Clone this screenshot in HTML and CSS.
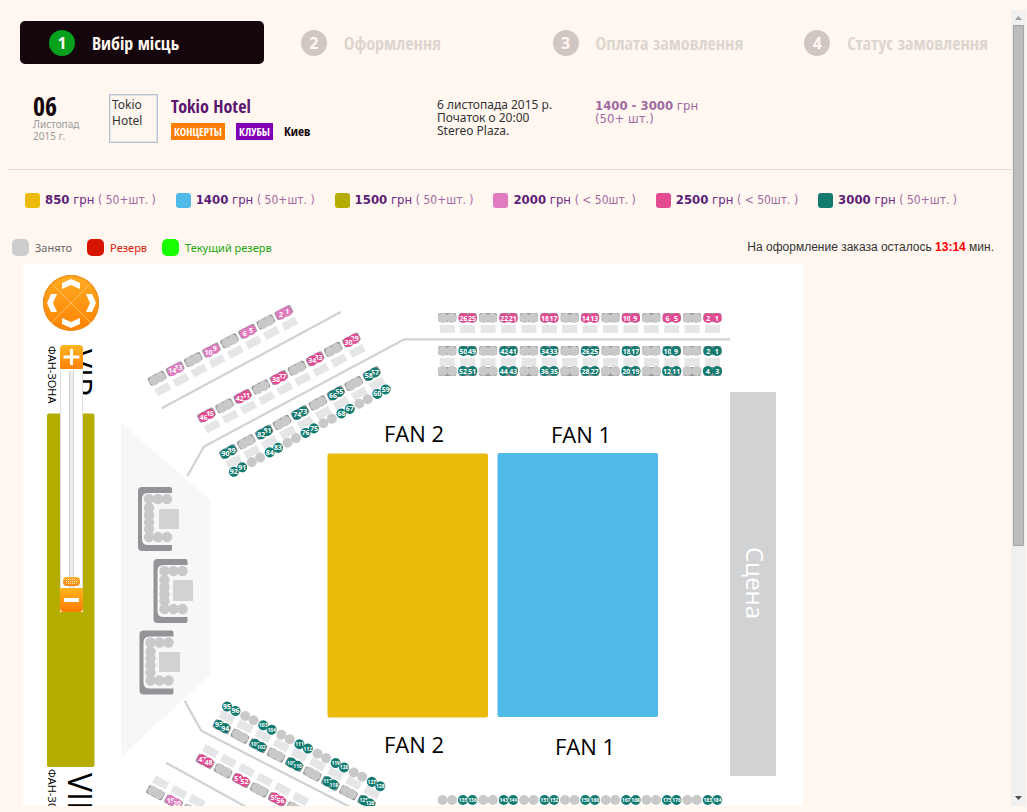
FILE: index.html
```html
<!DOCTYPE html>
<html lang="uk">
<head>
<meta charset="utf-8">
<title>Tokio Hotel</title>
<link rel="stylesheet" href="styles.css">
</head>
<body>
<div class="frame">
<main class="content">
  <ol class="steps">
    <li class="step step-active"><span class="step-num">1</span>Вибір місць</li>
    <li class="step"><span class="step-num">2</span>Оформлення</li>
    <li class="step"><span class="step-num">3</span>Оплата замовлення</li>
    <li class="step"><span class="step-num">4</span>Статус замовлення</li>
  </ol>

  <section class="event">
    <div class="date"><strong class="day">06</strong><span>Листопад</span><span>2015 г.</span></div>
    <div class="poster">Tokio Hotel</div>
    <div class="about">
      <a class="title" href="#">Tokio Hotel</a>
      <div class="tags"><a class="tag tag-concert" href="#">КОНЦЕРТЫ</a><a class="tag tag-club" href="#">КЛУБЫ</a><span class="city">Киев</span></div>
    </div>
    <div class="when">6 листопада 2015 р.<br>Початок о 20:00<br>Stereo Plaza.</div>
    <div class="cost"><b>1400 - 3000</b> грн<br>(50+ шт.)</div>
  </section>

  <ul class="prices">
    <li><i class="swatch c850"></i><span><b>850</b> грн <small>( 50+шт. )</small></span></li>
    <li><i class="swatch c1400"></i><span><b>1400</b> грн <small>( 50+шт. )</small></span></li>
    <li><i class="swatch c1500"></i><span><b>1500</b> грн <small>( 50+шт. )</small></span></li>
    <li><i class="swatch c2000"></i><span><b>2000</b> грн <small>( &lt; 50шт. )</small></span></li>
    <li><i class="swatch c2500"></i><span><b>2500</b> грн <small>( &lt; 50шт. )</small></span></li>
    <li><i class="swatch c3000"></i><span><b>3000</b> грн <small>( 50+шт. )</small></span></li>
  </ul>

  <div class="status">
    <ul class="states">
      <li class="busy"><i></i>Занято</li>
      <li class="reserve"><i></i>Резерв</li>
      <li class="mine"><i></i>Текущий резерв</li>
    </ul>
    <p class="timer">На оформление заказа осталось <b>13:14</b> мин.</p>
  </div>

  <div class="map">
    <svg class="hall" viewBox="23 264 780 542" preserveAspectRatio="xMinYMin slice">
      <defs>
        <g id="sofa">
          <path d="M32 0Q34 0 34 2V6H10Q4 6 4 12V52Q4 58 10 58H34V62Q34 64 32 64H4Q0 64 0 60V4Q0 0 4 0Z" fill="#939498"/>
          <g fill="#c9c9c9"><circle cx="11" cy="12" r="5.200"/><circle cx="20" cy="12" r="5.200"/><circle cx="29" cy="12" r="5.200"/><circle cx="11" cy="21" r="5.200"/><circle cx="11" cy="28" r="5.200"/><circle cx="11" cy="35" r="5.200"/><circle cx="11" cy="42" r="5.200"/><circle cx="11" cy="50" r="5.200"/><circle cx="20" cy="50" r="5.200"/><circle cx="29" cy="50" r="5.200"/></g>
        </g>
      </defs>
      <path d="M121 423L210.500 500.500V674L121 757Z" fill="#f7f7f7"/>
      <g fill="none" stroke="#d0d1d2" stroke-width="2.200">
        <path d="M161.700 408.300L340.700 312"/>
        <path d="M187.300 476L204 446.500L404.300 339.300H730"/>
        <path d="M184.700 701L201.300 730.700L352 808"/>
        <path d="M166 762.700L248 808"/>
      </g>
      <use href="#sofa" x="138" y="487"/><use href="#sofa" x="153.500" y="559"/><use href="#sofa" x="139.500" y="630.500"/>
      <g fill="#d1d2d4"><path d="M159 509h20v20h-20zM173 580h20v21h-20zM159 652h21v20h-21z"/></g>
      <rect x="327.500" y="453.500" width="160.500" height="264" rx="2" fill="#ebba0a"/>
      <rect x="497.500" y="453" width="160.500" height="264" rx="2" fill="#4fbae8"/>
      <rect x="730" y="392" width="46" height="384" fill="#d1d2d4"/>
      <rect x="47" y="413.500" width="47.500" height="353.500" rx="2" fill="#b4ad00"/>
      <g class="label">
        <text x="384" y="442">FAN 2</text><text x="551" y="443">FAN 1</text>
        <text x="384" y="753">FAN 2</text><text x="555" y="755">FAN 1</text>
      </g>
      <text class="stage" transform="translate(746 547) rotate(90)">Сцена</text>
      <g class="zone">
        <text transform="translate(48 346) rotate(90)">ФАН-ЗОНА</text>
        <text transform="translate(48 769) rotate(90)">ФАН-ЗОНА</text>
      </g>
      <g class="vip">
        <text transform="translate(68 349) rotate(90)">VIP</text>
        <text transform="translate(68 773) rotate(90)">VIP</text>
      </g>
      <g id="seats"></g>
    </svg>

    <div class="controls">
      <div class="pan">
        <svg class="pan-lines" viewBox="0 0 56 56" fill="none" stroke="#ffc062"><path d="M8 8L48 48M48 8L8 48"/></svg>
        <button class="pan-up" aria-label="Вгору"><svg viewBox="0 0 18 10"><path d="M9 0L18 4V10L9 6L0 10V4Z"/></svg></button>
        <button class="pan-left" aria-label="Ліворуч"><svg viewBox="0 0 10 18"><path d="M0 9L4 0H10L6 9L10 18H4Z"/></svg></button>
        <button class="pan-right" aria-label="Праворуч"><svg viewBox="0 0 10 18"><path d="M10 9L6 0H0L4 9L0 18H6Z"/></svg></button>
        <button class="pan-down" aria-label="Вниз"><svg viewBox="0 0 18 10"><path d="M9 10L18 6V0L9 4L0 0V6Z"/></svg></button>
      </div>
      <div class="zoom">
        <button class="zoom-in" aria-label="Збільшити"><svg viewBox="0 0 23 24"><path d="M10 4h3v6.500h6.500v3H13V20h-3v-6.500H3.500v-3H10z"/></svg></button>
        <input class="zoom-range" type="range" min="0" max="100" value="1" aria-label="Масштаб">
        <button class="zoom-out" aria-label="Зменшити"><svg viewBox="0 0 23 24"><path d="M4 10h15v4H4z"/></svg></button>
      </div>
    </div>
  </div>
</main>

<div class="scrollbar">
  <button aria-label="Прокрутити вгору"><svg viewBox="0 0 15 15"><path d="M4 10L7.500 6L11 10Z" fill="#a0a0a0"/></svg></button>
  <div class="track"><div class="thumb"></div></div>
  <button aria-label="Прокрутити вниз"><svg viewBox="0 0 15 15"><path d="M4 5L7.500 9L11 5Z" fill="#505050"/></svg></button>
</div>
</div>
<script src="seats.js"></script>
</body>
</html>
```
FILE: styles.css
```css
* { box-sizing: border-box; }
body {
  margin: 0;
  background: #fff7f0;
  color: #333;
  font: 12px/13px "Noto Sans", sans-serif;
}
ul, ol { margin: 0; padding: 0; list-style: none; }
button { padding: 0; border: 0; background: none; cursor: pointer; }
svg { display: block; }
a { text-decoration: none; }

.frame {
  display: flex;
  height: 100vh;
  padding: 10px 1px 6px 8px;
}
.content {
  flex: 1;
  min-width: 0;
  display: flex;
  flex-direction: column;
}

.steps {
  display: grid;
  grid-template-columns: repeat(4, 1fr);
  gap: 8px;
  margin: 11px -8px 0 12px;
}
.step {
  display: flex;
  align-items: center;
  gap: 17px;
  height: 43px;
  padding-left: 29px;
  border-radius: 5px;
  color: #dcd6cf;
  font: bold 18px/24px "Open Sans Condensed", "Liberation Sans Narrow", "Noto Sans", sans-serif;
  white-space: nowrap;
}
.step-num {
  width: 26px;
  height: 26px;
  border-radius: 50%;
  background: #d0c7c2;
  color: #fff7f0;
  font: bold 16px/26px "Open Sans", sans-serif;
  text-align: center;
}
.step-active { background: #14060c; color: #fff7f0; }
.step-active .step-num { background: #05a01c; }

.event {
  display: grid;
  grid-template-columns: 76px 62px 266px 158px 1fr;
  align-items: start;
  padding: 30px 0 26px 25px;
  border-bottom: 1px solid #dcdce2;
}
.date { display: flex; flex-direction: column; color: #999; font-size: 10px; line-height: 12px; }
.day { color: #14060c; font: bold 26px/24px "Open Sans Condensed", "Liberation Sans Narrow", "Noto Sans", sans-serif; }
.poster {
  width: 49px;
  height: 49px;
  padding: 2px;
  border: 1px solid #bcc3d0;
  outline: 1px solid #e0e4ea;
  outline-offset: -2px;
  line-height: 16px;
}
.title { color: #5b1670; font: bold 18px/24px "Open Sans Condensed", "Liberation Sans Narrow", "Noto Sans", sans-serif; }
.about { display: flex; flex-direction: column; gap: 5px; }
.tags { display: flex; gap: 11px; font: bold 11px/17px "Open Sans Condensed", "Liberation Sans Narrow", "Noto Sans", sans-serif; }
.tag { padding: 0 3px; color: #fff; }
.tag-concert { background: #ff7d05; }
.tag-club { background: #8400b4; }
.city { color: #14060c; font-size: 13px; }
.when { padding-top: 4px; }
.cost { padding-top: 5px; color: #9f6aa0; font: 13px/13px "DejaVu Sans Condensed", "DejaVu Sans", sans-serif; }

.prices {
  display: flex;
  gap: 20px;
  padding: 22px 0 0 17px;
  color: #6c2c84;
  font: 13px/16px "DejaVu Sans Condensed", "DejaVu Sans", sans-serif;
  white-space: nowrap;
}
.prices li { display: flex; align-items: center; gap: 5px; }
.prices b { color: #5b1e78; }
.prices small { color: #a06aa0; font-size: 12px; }
.swatch { width: 15px; height: 15px; border-radius: 3px; }
.c850 { background: #ebba0a; }
.c1400 { background: #4fbae8; }
.c1500 { background: #b4ad00; }
.c2000 { background: #e07bc0; }
.c2500 { background: #e24a92; }
.c3000 { background: #137a70; }

.status {
  display: flex;
  justify-content: space-between;
  align-items: center;
  padding: 31px 17px 8px 4px;
}
.states { display: flex; gap: 15px; font-size: 11px; line-height: 17px; }
.states li { display: flex; align-items: center; gap: 6px; }
.states i { width: 17px; height: 17px; border-radius: 5px; }
.busy { color: #666; }
.busy i { background: #ccc; }
.reserve { color: #d6200c; }
.reserve i { background: #d61400; }
.mine { color: #22a80c; }
.mine i { background: #1aff00; }
.timer { margin: 0; font: 12px/17px "Liberation Sans", sans-serif; }
.timer b { color: #f00; }

.map {
  position: relative;
  flex: 1;
  min-height: 0;
  width: calc(100% - 15px);
  max-width: 780px;
  margin-left: 15px;
  background: #fff;
  overflow: hidden;
}
.hall { width: 100%; height: 100%; font-family: "Open Sans", sans-serif; }
.label { font-size: 22px; }
.stage { font-size: 24px; fill: #fff; }
.zone { font-size: 11px; }
.vip { font-size: 32px; }
.seat-num { fill: #fff; font-size: 7px; font-weight: bold; text-anchor: middle; }
.seat-num.long { font-size: 5px; }

.controls {
  position: absolute;
  top: 11px;
  left: 20px;
  display: flex;
  flex-direction: column;
  align-items: center;
  gap: 14px;
}
.pan {
  position: relative;
  display: grid;
  grid-template: "a u b" 17px "l c r" 22px "d n e" 17px / 17px 22px 17px;
  width: 56px;
  height: 56px;
  border-radius: 50%;
  background: linear-gradient(#ffab22, #fe8305);
  box-shadow: inset 0 0 1px 1px #e98a10;
}
.pan svg { fill: #fff; }
.pan button { display: grid; place-items: center; position: relative; }
.pan .pan-lines { position: absolute; inset: 0; fill: none; }
.pan-up { grid-area: u; }
.pan-left { grid-area: l; }
.pan-right { grid-area: r; }
.pan-down { grid-area: n; }
.pan-up svg, .pan-down svg { width: 18px; height: 10px; }
.pan-left svg, .pan-right svg { width: 10px; height: 18px; }

.zoom { display: flex; flex-direction: column; width: 23px; background: #fff; }
.zoom svg { fill: #fff; }
.zoom-in { height: 24px; border-radius: 4px 4px 1px 1px; background: linear-gradient(#ffb41e, #ff8208); }
.zoom-out { height: 24px; border-radius: 1px 1px 4px 4px; background: linear-gradient(#ffb41e, #ff7a05); }
.zoom-range {
  appearance: none;
  writing-mode: vertical-lr;
  direction: rtl;
  width: 23px;
  height: 217px;
  margin: 2px 0 0;
  border: solid #ddd;
  border-width: 0 1px;
  background: linear-gradient(90deg, transparent 8px, #d4d4d4 8px, #d4d4d4 9px, #ececec 9px, #ececec 12px, #d4d4d4 12px, #d4d4d4 13px, transparent 13px);
}
.zoom-range::-webkit-slider-thumb {
  appearance: none;
  box-sizing: border-box;
  width: 17px;
  height: 9px;
  padding: 2px 3px;
  border-radius: 4px;
  background:
    linear-gradient(transparent 50%, #fa991c 50%) 0 0 / 2px 2px content-box,
    linear-gradient(90deg, #ffe9b8 50%, transparent 50%) 0 0 / 2px 2px content-box,
    linear-gradient(#ffae2a, #f58410);
}

.scrollbar { display: flex; flex-direction: column; width: 15px; background: #f0f0f0; }
.scrollbar button { height: 15px; }
.track { flex: 1; padding: 0 2px; }
.thumb { height: 68%; border: 1px solid #a6a6a6; background: #bcbcbc; }
```
FILE: seats.js
```javascript
const NS = 'http://www.w3.org/2000/svg';
const TEAL = '#137a70', PINK = '#e24a92', LILAC = '#e07bc0';
const STEP = 20.4;

// Each line of seats is a run of pairs; null marks a sold pair.
const line = (y, gap, color, labels, back = 0) => ({ y, gap, color, labels, back });
const sectors = [
  { x: 157.3, y: 378.7, angle: -27.4, tables: [12], lines: [
    line(0, 7, LILAC, [null, '14 13', null, '10 9', null, '6 5', null, '2 1'], -1)] },
  { x: 206.7, y: 415.5, angle: -27.4, tables: [12], lines: [
    line(0, 7, PINK, ['46 45', null, '42 41', null, '38 37', null, '34 33', null, '30 29'], -1)] },
  { x: 228.5, y: 452, angle: -28.5, tables: [11], lines: [
    line(0, 7, TEAL, ['90 89', null, '82 81', null, '74 73', null, '66 65', null, '58 57'], -1),
    line(20, 9.5, TEAL, ['92 91', null, '84 83', null, '76 75', null, '68 67', null, '60 59'])] },
  { x: 447.3, y: 318, angle: 0, tables: [11], lines: [
    line(0, 8.5, PINK, [null, '26 25', null, '22 21', null, '18 17', null, '14 13', null, '10 9', null, '6 5', null, '2 1'], -1)] },
  { x: 447.3, y: 351, angle: 0, tables: [11], lines: [
    line(0, 8.5, TEAL, [null, '50 49', null, '42 41', null, '34 33', null, '26 25', null, '18 17', null, '10 9', null, '2 1'], -1),
    line(20, 9.3, TEAL, [null, '52 51', null, '44 43', null, '36 35', null, '28 27', null, '20 19', null, '12 11', null, '4 3'], 1)] },
  { x: 447.3, y: 800, angle: 0, tables: [], lines: [
    line(0, 9.5, TEAL, [null, '135 136', null, '143 144', null, '151 152', null, '159 160', null, '167 168', null, '175 176', null, '183 184'])] },
  { x: 231.3, y: 708.7, angle: 27.5, tables: [9.5], lines: [
    line(0, 9.5, TEAL, ['95 96', null, '103 104', null, '111 112', null, '119 120', null, '127 128']),
    line(20, 7, TEAL, ['93 94', null, '101 102', null, '109 110', null, '117 118', null, '125 126'], 1)] },
  { x: 205.3, y: 761, angle: 27.8, tables: [-11], lines: [
    line(0, 7, PINK, ['47 48', null, '51 52', null, '55 56', null], 1)] },
  { x: 155.7, y: 792.3, angle: 27.5, tables: [-11], lines: [
    line(0, 7, LILAC, [null, '19 20', null], 1)] }
];

function add(parent, tag, attrs, text) {
  const el = document.createElementNS(NS, tag);
  for (const k in attrs) el.setAttribute(k, attrs[k]);
  if (text) el.textContent = text;
  parent.appendChild(el);
  return el;
}

const root = document.getElementById('seats');
for (const s of sectors) {
  const g = add(root, 'g', { transform: `translate(${s.x} ${s.y}) rotate(${s.angle})` });
  const count = s.lines[0].labels.length;
  // The seat nearer the bottom of the hall plan is painted last.
  const order = s.angle < 0 ? [1, 0] : [0, 1];
  for (const t of s.tables)
    for (let i = 0; i < count; i++)
      add(g, 'rect', { x: i * STEP - 7.5, y: t - 4, width: 15, height: 8, fill: '#e5e6e8' });
  for (const l of s.lines)
    l.labels.forEach((label, i) => {
      const cx = i * STEP;
      if (l.back) add(g, 'rect', { x: cx - 9, y: l.y - 4.5 + l.back * 0.5, width: 18, height: 9, rx: 2, fill: '#98999c' });
      const nums = label ? label.split(' ') : ['', ''];
      order.forEach(j => {
        const n = nums[j];
        const x = cx + (j - 0.5) * l.gap;
        add(g, 'circle', { cx: x, cy: l.y, r: 5, fill: label ? l.color : '#c9c9c9' });
        if (n) add(g, 'text', {
          class: n.length > 2 ? 'seat-num long' : 'seat-num',
          transform: `translate(${x} ${l.y}) rotate(${-s.angle})`,
          y: n.length > 2 ? 2 : 2.5
        }, n);
      });
    });
}
```
